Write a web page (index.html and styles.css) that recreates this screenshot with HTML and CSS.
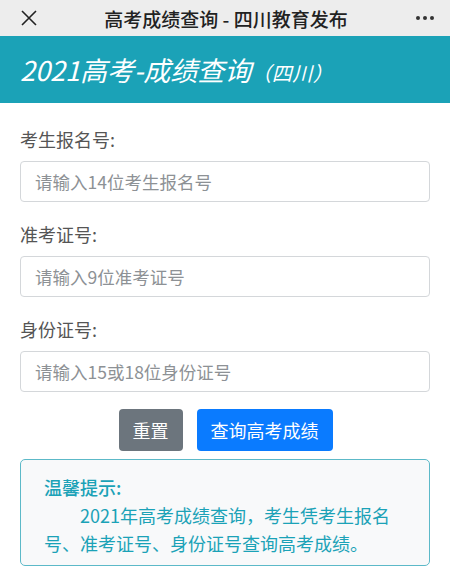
FILE: index.html
```html
<!DOCTYPE html>
<html lang="zh-CN">
<head>
    <meta charset="UTF-8">
    <meta name="viewport" content="width=device-width, initial-scale=1.0">
    <title>高考成绩查询 - 四川教育发布</title>
    <link rel="stylesheet" href="styles.css">
</head>
<body>
    <div class="topbar">
        <svg class="close" width="18" height="18" viewBox="0 0 18 18">
            <path d="M2 2 L16 16 M16 2 L2 16" stroke="#222" stroke-width="1.6" fill="none"/>
        </svg>
        <div class="topbar-title">高考成绩查询 - 四川教育发布</div>
        <div class="more">
            <span></span><span></span><span></span>
        </div>
    </div>

    <div class="header">
        <h1>2021高考-成绩查询<small>（四川）</small></h1>
    </div>

    <form class="form">
        <div class="form-group">
            <label for="bmh">考生报名号:</label>
            <input type="text" id="bmh" placeholder="请输入14位考生报名号">
        </div>
        <div class="form-group">
            <label for="zkzh">准考证号:</label>
            <input type="text" id="zkzh" placeholder="请输入9位准考证号">
        </div>
        <div class="form-group">
            <label for="sfzh">身份证号:</label>
            <input type="text" id="sfzh" placeholder="请输入15或18位身份证号">
        </div>
        <div class="buttons">
            <button type="reset" class="btn btn-gray">重置</button>
            <button type="button" class="btn btn-blue">查询高考成绩</button>
        </div>
    </form>

    <div class="tips">
        <p class="tips-title">温馨提示:</p>
        <p class="tips-text">2021年高考成绩查询，考生凭考生报名号、准考证号、身份证号查询高考成绩。</p>
    </div>
</body>
</html>
```

FILE: styles.css
```css
body {
    margin: 0;
    font-family: "Noto Sans CJK SC", "Noto Sans", sans-serif;
    background-color: #fff;
    color: #555;
}
.topbar {
    height: 36px;
    background-color: #ededed;
    display: flex;
    align-items: center;
    padding: 0 16px 0 20px;
}
.close {
    flex: none;
}
.topbar-title {
    flex: 1;
    text-align: center;
    font-size: 19px;
    font-weight: 500;
    color: #222;
    padding-right: 2px;
}
.more {
    display: flex;
    gap: 3px;
    width: 18px;
}
.more span {
    width: 4px;
    height: 4px;
    border-radius: 50%;
    background-color: #333;
}
.header {
    height: 67px;
    background-color: #1ba2b7;
    display: flex;
    align-items: center;
    padding-left: 20px;
}
.header h1 {
    margin: 0;
    color: #fff;
    font-size: 27px;
    font-weight: normal;
    font-style: italic;
    line-height: 1;
}
.header h1 small {
    font-size: 20px;
    letter-spacing: 0.5px;
}
.form {
    padding: 24px 20px 0 20px;
}
.form-group {
    margin-bottom: 20px;
}
label {
    display: block;
    font-size: 18px;
    line-height: 24px;
    margin-bottom: 10px;
    color: #555;
}
input {
    display: block;
    width: 100%;
    box-sizing: border-box;
    height: 41px;
    padding: 0 14px;
    font-family: inherit;
    font-size: 17.5px;
    border: 1px solid #d4d7da;
    border-radius: 4px;
    color: #333;
}
input::placeholder {
    color: #8d9195;
}
.buttons {
    display: flex;
    justify-content: center;
    gap: 14px;
    margin-top: -3px;
    padding-left: 1px;
}
.btn {
    height: 42px;
    padding: 0 14px;
    font-family: inherit;
    font-size: 18px;
    color: white;
    border: none;
    border-radius: 4px;
    cursor: pointer;
}
.btn-gray {
    background-color: #6c757d;
}
.btn-blue {
    background-color: #0a7bff;
}
.tips {
    margin: 8px 20px 0 20px;
    padding: 13px 23px 8px 23px;
    border: 1px solid #5cb9c8;
    border-radius: 5px;
    background-color: #f8f9fa;
    color: #1ba2b7;
    font-size: 18px;
    line-height: 28px;
}
.tips p {
    margin: 0;
}
.tips-title {
    font-weight: 500;
}
.tips-text {
    text-indent: 2em;
}
```
